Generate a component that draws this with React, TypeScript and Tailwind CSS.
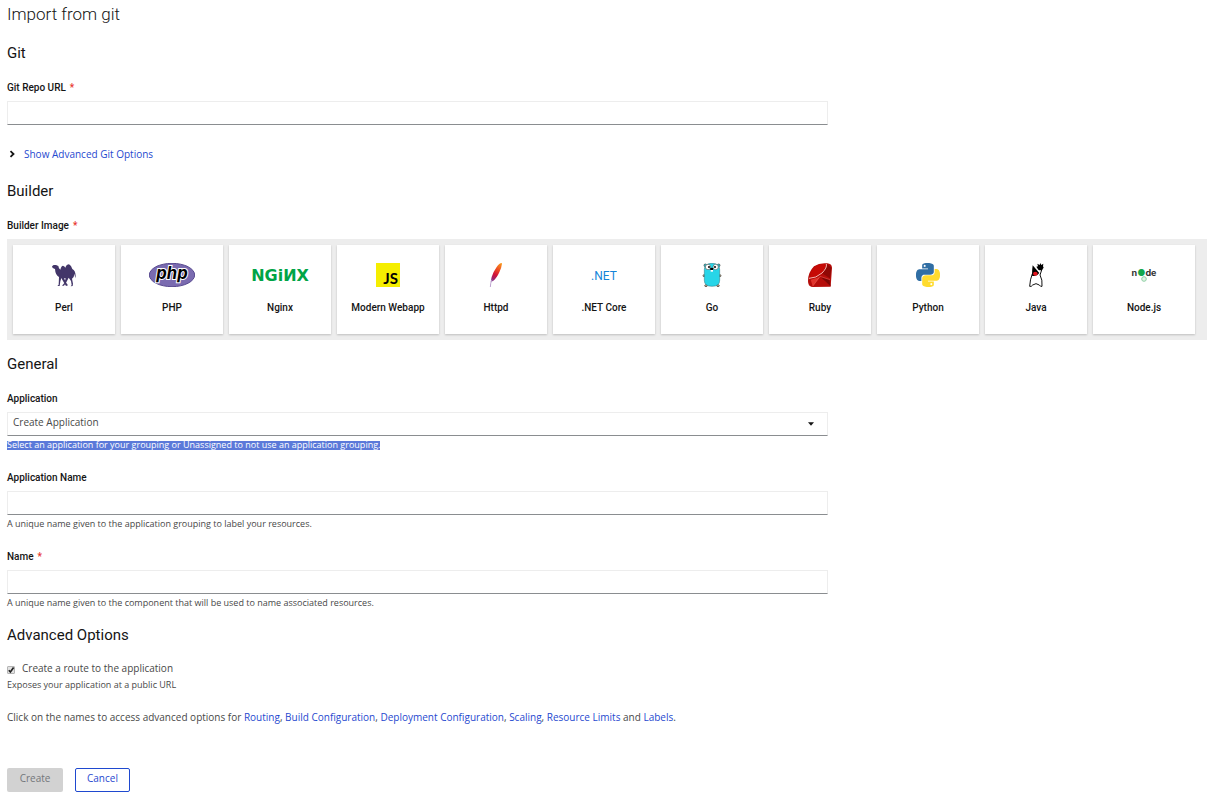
import type { ReactNode } from "react";

function PerlLogo() {
  return (
    <svg viewBox="0 0 72 72" className="size-6" aria-hidden="true">
      <path
        fill="#433669"
        d="M0 10 L5 6 L12 6 L19 9 L21 16 L25 20 Q28 8 33 8 Q38 9 40 14 Q44 4 51 4 Q58 7 61 18 Q70 22 71 38 L70 46 L67 32 L65 42 L60 47 L63 62 L62 69 L56 70 L59 66 L57 54 L50 44 L43 58 L36 68 L30 68 L37 60 L41 46 L36 46 L43 60 L48 67 L42 69 L33 54 L28 45 L25 55 L23 69 L16 69 L20 65 L21 42 Q10 36 9 18 L2 15 Z"
      />
    </svg>
  );
}

function PhpLogo() {
  return (
    <svg viewBox="0 0 138 72" className="h-6 w-[46px]" aria-hidden="true">
      <ellipse cx="69" cy="36" rx="68" ry="35" fill="#7a6bb0" stroke="#5a4b91" strokeWidth="3" />
      <text x="69" y="48" textAnchor="middle" fontSize="50" fontWeight="700" fontStyle="italic" className="font-['Inter',sans-serif]" fill="#000" stroke="#fff" strokeWidth="6" paintOrder="stroke">
        php
      </text>
    </svg>
  );
}

function NginxLogo() {
  return (
    <svg viewBox="0 0 60 24" className="h-6 w-15" aria-hidden="true">
      <text x="30" y="18" textAnchor="middle" fontSize="16" fontWeight="700" className="font-['DejaVu_Sans',sans-serif]" fill="#00a446">
        NGiИX
      </text>
    </svg>
  );
}

function JsLogo() {
  return (
    <svg viewBox="0 0 24 24" className="size-6" aria-hidden="true">
      <rect width="24" height="24" fill="#f5ee00" />
      <text x="22" y="21" textAnchor="end" fontSize="15" fontWeight="700" className="font-['Lato',sans-serif]" fill="#000">
        JS
      </text>
    </svg>
  );
}

function HttpdLogo() {
  return (
    <svg viewBox="0 0 72 72" className="size-6" aria-hidden="true">
      <defs>
        <linearGradient id="feather" x1="54" y1="0" x2="20" y2="60" gradientUnits="userSpaceOnUse">
          <stop offset="0" stopColor="#f9a01b" />
          <stop offset="0.35" stopColor="#ee4a23" />
          <stop offset="0.6" stopColor="#d0113a" />
          <stop offset="0.85" stopColor="#8a2a7c" />
          <stop offset="1" stopColor="#6a3a96" />
        </linearGradient>
      </defs>
      <path d="M53 0 Q46 0 38 12 Q28 26 23 42 L20 56 L27 54 Q38 46 46 28 Q53 12 54 2 Z" fill="url(#feather)" />
      <path d="M24 50 Q19 60 19 72" fill="none" stroke="#bda3d0" strokeWidth="3" />
    </svg>
  );
}

function DotNetLogo() {
  return (
    <svg viewBox="0 0 26 24" className="h-6 w-[26px]" aria-hidden="true">
      <text x="13" y="17" textAnchor="middle" fontSize="12" fontWeight="400" className="font-['Roboto',sans-serif]" fill="#1384d8">
        .NET
      </text>
    </svg>
  );
}

function GoLogo() {
  return (
    <svg viewBox="0 0 72 72" className="size-6" aria-hidden="true">
      <g stroke="#3b3a36" strokeWidth="2">
        <ellipse cx="12" cy="38" rx="3" ry="3" fill="#d9b28c" />
        <ellipse cx="60" cy="38" rx="3" ry="3" fill="#d9b28c" />
        <ellipse cx="18" cy="68" rx="4" ry="3" fill="#d9b28c" />
        <ellipse cx="54" cy="68" rx="4" ry="3" fill="#d9b28c" />
        <circle cx="16" cy="7" r="4" fill="#27d5e8" />
        <circle cx="56" cy="7" r="4" fill="#27d5e8" />
      </g>
      <path d="M13 20 Q13 1 36 1 Q59 1 59 20 L59 52 Q59 70 36 70 Q13 70 13 52 Z" fill="#27d5e8" stroke="#24707c" strokeWidth="1.5" />
      <g stroke="#3b3a36" strokeWidth="1.5">
        <circle cx="24" cy="12" r="8" fill="#fff" />
        <circle cx="47" cy="12" r="8" fill="#fff" />
      </g>
      <circle cx="27" cy="12" r="3" />
      <circle cx="45" cy="12" r="3" />
      <ellipse cx="35" cy="18" rx="5" ry="4" />
      <path d="M32 21h7v5h-7z" fill="#fff" />
    </svg>
  );
}

function RubyLogo() {
  return (
    <svg viewBox="0 0 72 72" className="size-6" aria-hidden="true">
      <path d="M18 10 Q36 -2 58 1 Q71 2 72 14 L68 71 L12 72 Q0 70 0 54 Q0 28 18 10 Z" fill="#b50d0a" />
      <path d="M22 10 Q40 0 54 4 Q56 16 40 30 Q22 46 8 46 Q2 30 22 10 Z" fill="#c60a06" />
      <path d="M38 42 L64 50 L68 70 Z" fill="#7d0705" />
      <path d="M58 4 L70 14 L66 46 L44 32 Z" fill="#8e0805" />
      <path d="M8 50 L14 70 L36 42 Z" fill="#e0332b" />
      <path d="M3 46 Q24 46 42 30 Q58 14 55 3" fill="none" stroke="#f3b5b0" strokeWidth="3" />
      <path d="M14 70 L36 40 L66 50" fill="none" stroke="#e8655c" strokeWidth="1.5" />
    </svg>
  );
}

function PythonLogo() {
  return (
    <svg viewBox="0 0 24 24" className="size-6" aria-hidden="true">
      <path
        fill="#306ea4"
        d="M14.25.18l.9.2.73.26.59.3.45.32.34.34.25.34.16.33.1.3.04.26.02.2-.01.13V8.5l-.05.63-.13.55-.21.46-.26.38-.3.31-.33.25-.35.19-.35.14-.33.1-.3.07-.26.04-.21.02H8.77l-.69.05-.59.14-.5.22-.41.27-.33.32-.27.35-.2.36-.15.37-.1.35-.07.32-.04.27-.02.21v3.06H3.17l-.21-.03-.28-.07-.32-.12-.35-.18-.36-.26-.36-.36-.35-.46-.32-.59-.28-.73-.21-.88-.14-1.05-.05-1.23.06-1.22.16-1.04.24-.87.32-.71.36-.57.4-.44.42-.33.42-.24.4-.16.36-.1.32-.05.24-.01h.16l.06.01h8.16v-.83H6.18l-.01-2.75-.02-.37.05-.34.11-.31.17-.28.25-.26.31-.23.38-.2.44-.18.51-.15.58-.12.64-.1.71-.06.77-.04.84-.02 1.27.05zm-6.3 1.98l-.23.33-.08.41.08.41.23.34.33.22.41.09.41-.09.33-.22.23-.34.08-.41-.08-.41-.23-.33-.33-.22-.41-.09-.41.09z"
      />
      <path
        fill="#ffdb2e"
        d="M21.04 6.11l.28.06.32.12.35.18.36.27.36.35.35.47.32.59.28.73.21.88.14 1.04.05 1.23-.06 1.23-.16 1.04-.24.86-.32.71-.36.57-.4.45-.42.33-.42.24-.4.16-.36.09-.32.05-.24.02-.16-.01h-8.22v.82h5.84l.01 2.76.02.36-.05.34-.11.31-.17.29-.25.25-.31.24-.38.2-.44.17-.51.15-.58.13-.64.09-.71.07-.77.04-.84.01-1.27-.04-1.07-.14-.9-.2-.73-.25-.59-.3-.45-.33-.34-.34-.25-.34-.16-.33-.1-.3-.04-.25-.02-.2.01-.13v-5.34l.05-.64.13-.54.21-.46.26-.38.3-.32.33-.24.35-.2.35-.14.33-.1.3-.06.26-.04.21-.02.13-.01h5.84l.69-.05.59-.14.5-.21.41-.28.33-.32.27-.35.2-.36.15-.36.1-.35.07-.32.04-.28.02-.21V6.07h2.09l.14.01zm-6.47 14.25l-.23.33-.08.41.08.41.23.33.33.23.41.08.41-.08.33-.23.23-.33.08-.41-.08-.41-.23-.33-.33-.23-.41-.08-.41.08z"
      />
    </svg>
  );
}

function JavaLogo() {
  return (
    <svg viewBox="0 0 72 72" className="size-6" aria-hidden="true">
      <path d="M25 32 Q18 50 17 70 Q22 72 26 66 Q36 58 46 66 Q50 72 54 70 Q56 50 48 36 L54 18" fill="#fff" stroke="#111" strokeWidth="3" />
      <path d="M26 7 L46 30 Q38 42 24 38 Q24 20 26 7 Z" />
      <path d="M43 20 L37 11 L42 10 L40 2 L47 6 L49 0 L52 6 L58 2 L57 10 L59 14 L53 22 L46 22 Z" />
      <ellipse cx="34" cy="32" rx="7" ry="6" fill="#e3131d" />
    </svg>
  );
}

function NodeLogo() {
  return (
    <svg viewBox="0 0 26 24" className="h-6 w-[26px]" aria-hidden="true">
      <text x="13" y="13" textAnchor="middle" fontSize="9" fontWeight="700" className="font-['Inter',sans-serif]" fill="#333">
        n<tspan fill="#13a74c">●</tspan>de
      </text>
      <circle cx="13" cy="16" r="2.3" fill="#e2f3e6" stroke="#8fd0a4" strokeWidth="1" />
    </svg>
  );
}

const builders: { name: string; logo: ReactNode }[] = [
  { name: "Perl", logo: <PerlLogo /> },
  { name: "PHP", logo: <PhpLogo /> },
  { name: "Nginx", logo: <NginxLogo /> },
  { name: "Modern Webapp", logo: <JsLogo /> },
  { name: "Httpd", logo: <HttpdLogo /> },
  { name: ".NET Core", logo: <DotNetLogo /> },
  { name: "Go", logo: <GoLogo /> },
  { name: "Ruby", logo: <RubyLogo /> },
  { name: "Python", logo: <PythonLogo /> },
  { name: "Java", logo: <JavaLogo /> },
  { name: "Node.js", logo: <NodeLogo /> },
];

const labelClass = "block font-['Roboto',sans-serif] text-[10px] leading-4 font-medium text-[#151515]";
const inputClass =
  "mt-[5px] block h-6 w-full rounded-none border border-[#ededed] border-b-[#8a8d90] bg-white px-[5px] text-[10px] text-[#484848] outline-none";

function Required() {
  return <span className="ml-1 text-[#e8352c]">*</span>;
}

function Heading({ children }: { children: ReactNode }) {
  return <h2 className="font-['Roboto',sans-serif] text-[15px] leading-5 text-[#151515]">{children}</h2>;
}

function Helper({ id, children }: { id: string; children: ReactNode }) {
  return (
    <p id={id} className="mt-px text-[9px] leading-4 text-[#484848]">
      {children}
    </p>
  );
}

function OptionLink({ children }: { children: ReactNode }) {
  return (
    <a href="#" className="text-[#1f49cf]">
      {children}
    </a>
  );
}

export default function App() {
  return (
    <main className="bg-white pt-1 pb-[6px] pl-[7px] font-['Open_Sans',sans-serif] text-[10px] leading-4 text-[#484848]">
      <h1 className="font-['Roboto',sans-serif] text-[17px] leading-5 font-light text-[#151515]">Import from git</h1>
      <form className="mt-[19px]" onSubmit={(e) => e.preventDefault()}>
        <Heading>Git</Heading>
        <div className="mt-[17px] max-w-[821px]">
          <label htmlFor="repo" className={labelClass}>
            Git Repo URL
            <Required />
          </label>
          <input id="repo" type="text" className={inputClass} />
        </div>
        <button type="button" className="mt-[21px] flex items-center gap-2 text-[#1f49cf]">
          <svg viewBox="0 0 8 8" className="ml-px size-2 text-[#151515]" aria-hidden="true">
            <path d="M2.5 1.2 L5.5 4 L2.5 6.8" fill="none" stroke="currentColor" strokeWidth="1.8" />
          </svg>
          Show Advanced Git Options
        </button>

        <div className="mt-[19px]">
          <Heading>Builder</Heading>
        </div>
        <div id="builder-label" className={`mt-[17px] ${labelClass}`}>
          Builder Image
          <Required />
        </div>
        <div role="group" aria-labelledby="builder-label" className="mt-[5px] flex flex-wrap gap-[6px] bg-[#ededed] p-[6px]">
          {builders.map((b) => (
            <button
              key={b.name}
              type="button"
              className="flex h-[89px] w-[102px] flex-col items-center bg-white pt-[18px] font-['Roboto',sans-serif] text-[10px] leading-4 font-medium text-[#151515] shadow-[0_1px_2px_rgba(3,3,3,0.2)]"
            >
              {b.logo}
              <span className="mt-[13px]">{b.name}</span>
            </button>
          ))}
        </div>

        <div className="mt-[14px]">
          <Heading>General</Heading>
        </div>
        <div className="mt-[17px] max-w-[821px]">
          <label htmlFor="application" className={labelClass}>
            Application
          </label>
          <div className="relative">
            <select id="application" aria-describedby="application-help" className={`${inputClass} appearance-none pb-1`}>
              <option>Create Application</option>
            </select>
            <svg viewBox="0 0 6 4" className="pointer-events-none absolute top-[10px] right-[14px] h-1 w-[6px]" aria-hidden="true">
              <path d="M0 0.3h6L3 3.7z" fill="#151515" />
            </svg>
          </div>
          <p id="application-help" className="mt-[5px] w-fit bg-[#5b79d9] pb-[2px] text-[9px] leading-[7px] text-white">
            Select an application for your grouping or Unassigned to not use an application grouping.
          </p>
        </div>
        <div className="mt-5 max-w-[821px]">
          <label htmlFor="app-name" className={labelClass}>
            Application Name
          </label>
          <input id="app-name" type="text" aria-describedby="app-name-help" className={inputClass} />
          <Helper id="app-name-help">A unique name given to the application grouping to label your resources.</Helper>
        </div>
        <div className="mt-[17px] max-w-[821px]">
          <label htmlFor="name" className={labelClass}>
            Name
            <Required />
          </label>
          <input id="name" type="text" aria-describedby="name-help" className={inputClass} />
          <Helper id="name-help">
            A unique name given to the component that will be used to name associated resources.
          </Helper>
        </div>

        <div className="mt-[14px]">
          <Heading>Advanced Options</Heading>
        </div>
        <div className="mt-[15px]">
          <label className="flex w-fit items-center gap-[7px]">
            <span className="relative mt-1 size-2">
              <input
                type="checkbox"
                defaultChecked
                aria-describedby="route-help"
                className="peer block size-2 appearance-none rounded-[1px] border border-[#b5b5b5] bg-[#e2e2e2]"
              />
              <svg viewBox="0 0 8 8" className="pointer-events-none invisible absolute inset-0 size-2 peer-checked:visible" aria-hidden="true">
                <path d="M1.8 4.2 L3.4 6 L6.6 1.6" fill="none" stroke="#222" strokeWidth="1.7" />
              </svg>
            </span>
            Create a route to the application
          </label>
          <Helper id="route-help">Exposes your application at a public URL</Helper>
        </div>
        <p className="mt-4">
          Click on the names to access advanced options for <OptionLink>Routing</OptionLink>,{" "}
          <OptionLink>Build Configuration</OptionLink>, <OptionLink>Deployment Configuration</OptionLink>,{" "}
          <OptionLink>Scaling</OptionLink>, <OptionLink>Resource Limits</OptionLink> and <OptionLink>Labels</OptionLink>.
        </p>
        <div className="mt-[43px] flex gap-3">
          <button type="submit" disabled className="h-6 min-w-14 rounded-[2px] bg-[#d2d2d2] px-3 pb-1 text-[#72767b]">
            Create
          </button>
          <button type="button" className="h-6 rounded-[2px] border border-[#1f49cf] px-[11px] pb-1 text-[#1f49cf]">
            Cancel
          </button>
        </div>
      </form>
    </main>
  );
}
